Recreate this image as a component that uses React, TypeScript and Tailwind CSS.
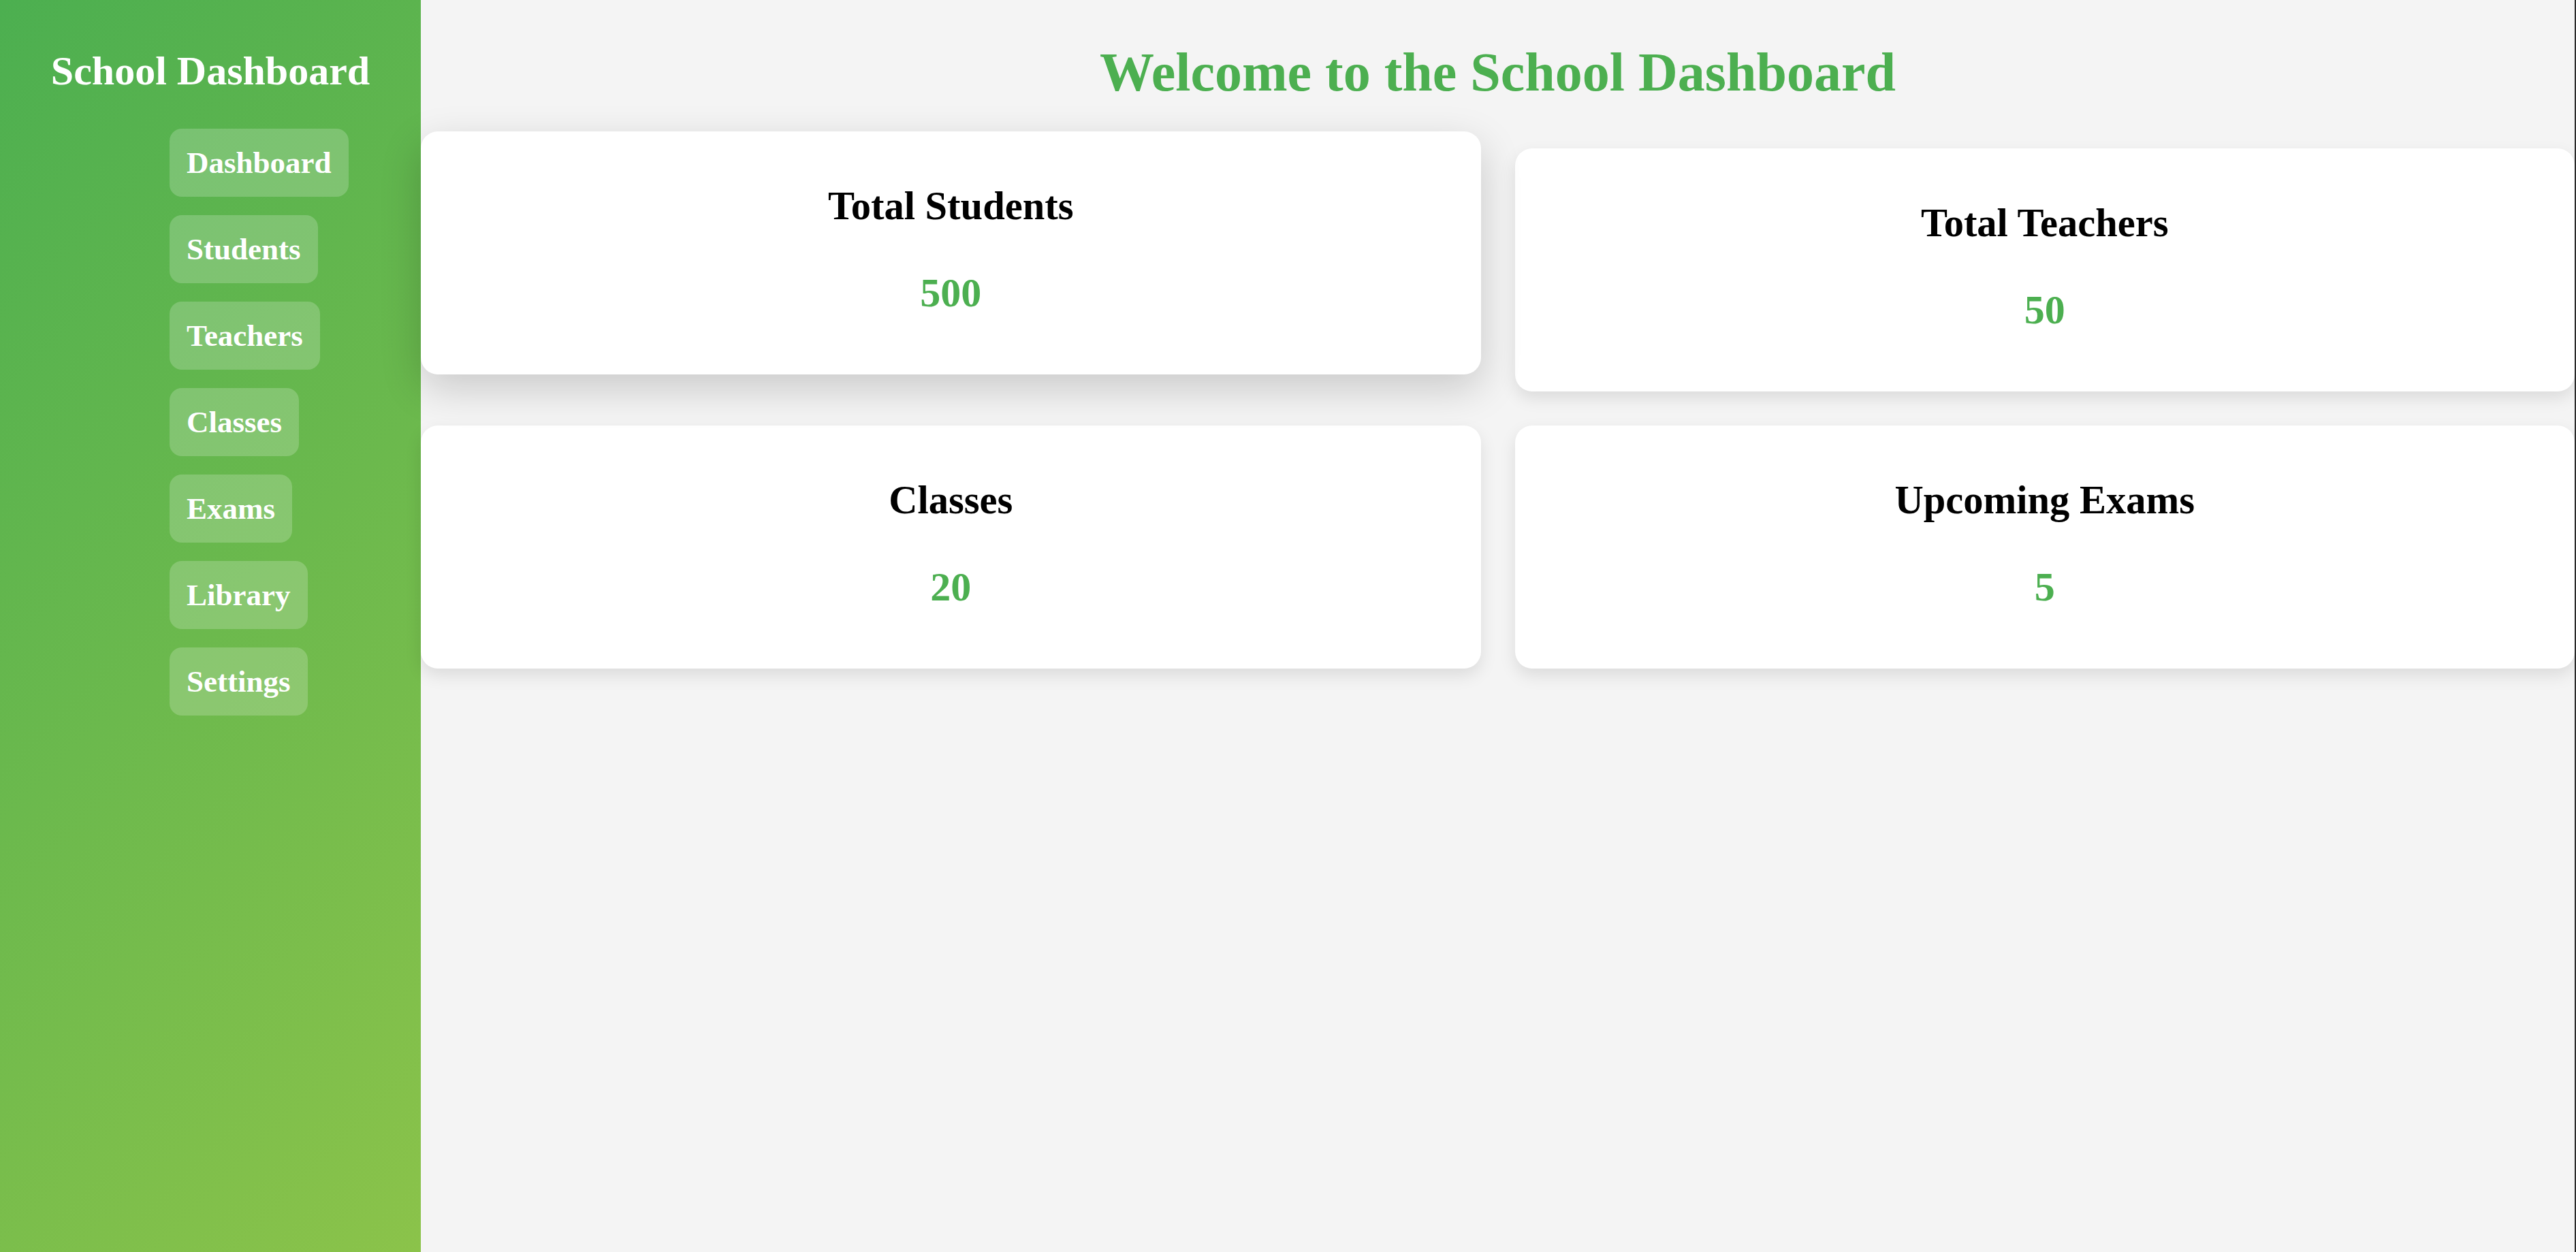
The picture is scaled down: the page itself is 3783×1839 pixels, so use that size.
import React from "react";

// --- Data ---
const NAV_ITEMS = ["Dashboard", "Students", "Teachers", "Classes", "Exams", "Library", "Settings"];

const STATS = [
  { id: "students", title: "Total Students", value: 500, hovered: true },
  { id: "teachers", title: "Total Teachers", value: 50, hovered: false },
  { id: "classes", title: "Classes", value: 20, hovered: false },
  { id: "exams", title: "Upcoming Exams", value: 5, hovered: false },
];

function StatCard({ title, value, hovered }: { title: string; value: number; hovered: boolean }) {
  return (
    <div
      className={`bg-white rounded-[25px] pt-[76px] pb-[85px] text-center ${
        hovered
          ? "-translate-y-[25px] shadow-[0_20px_60px_rgba(0,0,0,0.18)]"
          : "shadow-[0_10px_25px_rgba(0,0,0,0.1)]"
      }`}
    >
      <h3 className="text-[58.5px] leading-[67px] font-bold text-black">{title}</h3>
      <p className="mt-[60px] text-[60px] leading-[69px] font-bold text-[#4CAF50]">{value}</p>
    </div>
  );
}

export default function App() {
  return (
    <div
      className="flex min-h-screen w-full bg-[#f4f4f4] border-r-2 border-[#2b2b2b]"
      style={{ fontFamily: '"Liberation Serif", "Times New Roman", serif' }}
    >
      {/* Sidebar */}
      <aside className="w-[618px] shrink-0 min-h-screen bg-[linear-gradient(135deg,#4CAF50,#8BC34A)] text-white">
        <h2 className="mt-[70px] text-center text-[60px] leading-[69px] font-bold">School Dashboard</h2>
        <nav className="mt-[50px] pl-[249px] flex flex-col items-start gap-[27px]">
          {NAV_ITEMS.map((item) => (
            <a
              key={item}
              href="#"
              className="h-[100px] flex items-center px-[25px] rounded-[18px] bg-white/20 text-[45px] leading-[50px] font-bold text-white"
            >
              {item}
            </a>
          ))}
        </nav>
      </aside>

      {/* Main */}
      <main className="flex-1 min-w-0">
        <h1 className="mt-[60px] text-center text-[80px] leading-[92px] font-bold text-[#4CAF50]">
          Welcome to the School Dashboard
        </h1>
        <div className="mt-[66px] grid grid-cols-2 gap-[50px]">
          {STATS.map((s) => (
            <StatCard key={s.id} title={s.title} value={s.value} hovered={s.hovered} />
          ))}
        </div>
      </main>
    </div>
  );
}
